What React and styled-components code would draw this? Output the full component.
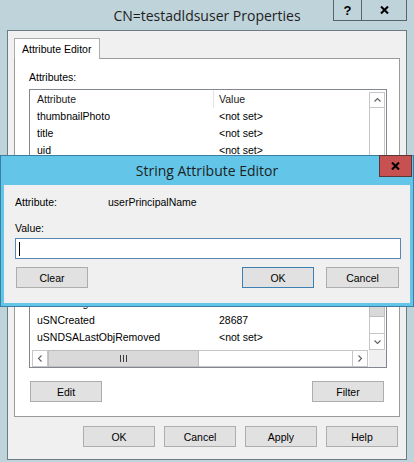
import React from "react";
import styled, { createGlobalStyle } from "styled-components";

const Global = createGlobalStyle`
  html, body { margin: 0; padding: 0; }
  body {
    width: 414px; height: 462px; overflow: hidden;
    font-family: "Liberation Sans", Arial, sans-serif;
    font-size: 10.5px; color: #000;
  }
`;

const Window = styled.div`
  position: relative;
  width: 414px; height: 462px; box-sizing: border-box;
  background: #bfd3da;
  padding: 0 7px 2px;
  display: flex; flex-direction: column;
`;

const TitleBar = styled.div`
  height: 30px; flex: none;
  display: grid; grid-template-columns: 1fr auto 1fr; align-items: center;
`;

const TitleText = styled.div`
  grid-column: 2;
  font-family: "Open Sans", "Liberation Sans", sans-serif;
  font-size: 14px; color: #1e1e1e;
  padding-top: ${(p) => (p.$pt ? p.$pt : 0)}px;
`;

const CaptionButtons = styled.div`
  grid-column: 3; justify-self: end; align-self: start;
  display: flex;
`;

const CaptionButton = styled.div`
  width: ${(p) => p.$w}px; height: 21px; box-sizing: border-box;
  border: 1px solid #56646c; border-top: none;
  & + & { border-left: none; }
  display: flex; align-items: center; justify-content: center;
  font-family: "Liberation Sans", Arial, sans-serif;
  font-weight: bold; font-size: 13px; color: #000;
`;

const Client = styled.div`
  flex: 1;
  border: 1px solid #6c7b84;
  background: #f0f0f0;
  padding: 7px 6px 12px;
  display: flex; flex-direction: column;
`;

const TabStrip = styled.div`
  display: flex; flex: none;
`;

const Tab = styled.div`
  height: 21px; box-sizing: border-box;
  border: 1px solid #acacac; border-bottom: none;
  background: #fff;
  padding: 0 8px 0 7px; line-height: 20px;
  margin-bottom: -1px; position: relative; z-index: 1;
`;

const TabPanel = styled.div`
  height: 359px; box-sizing: border-box;
  background: #fff;
  border: 1px solid #9a9a9a;
  padding: 12px 13px 14px 14px;
  display: flex; flex-direction: column;
`;

const Label = styled.div`
  line-height: 13px; margin-bottom: 5px;
`;

const ListBox = styled.div`
  width: 358px; height: 279px; box-sizing: border-box;
  border: 1px solid #828790;
  background: #fff;
  display: grid;
  grid-template-columns: 1fr 17px;
  grid-template-rows: 1fr 17px;
`;

const ListView = styled.div`
  overflow: hidden; display: flex; flex-direction: column;
`;

const HeaderRow = styled.div`
  display: flex; height: 18px; flex: none; line-height: 18px; color: #1a1a1a;
`;

const HeaderCell = styled.div`
  width: ${(p) => p.$w}px; box-sizing: border-box; flex: none;
  padding-left: ${(p) => p.$pl}px;
  border-right: ${(p) => (p.$sep ? "1px solid #e3e3e3" : "none")};
`;

const Rows = styled.div`
  flex: 1; overflow: hidden;
`;

const Row = styled.div`
  display: flex; height: 17px; line-height: 17px; white-space: nowrap;
`;

const Cell = styled.div`
  width: ${(p) => p.$w}px; box-sizing: border-box; flex: none;
  padding-left: ${(p) => p.$pl}px;
`;

const VScroll = styled.div`
  display: flex; flex-direction: column;
  padding-top: 2px;
`;

const ScrollBox = styled.div`
  box-sizing: border-box; flex: none;
  width: ${(p) => p.$w || 16}px; height: ${(p) => p.$h || 16}px;
  border: 1px solid #c6c6c6;
  background: #fff;
  display: flex; align-items: center; justify-content: center;
`;

const VTrack = styled.div`
  flex: 1; width: 16px; box-sizing: border-box;
  border-left: 1px solid #c6c6c6; border-right: 1px solid #c6c6c6;
`;

const VGap = styled.div`
  width: 16px; height: 16px; box-sizing: border-box; flex: none;
  border-left: 1px solid #c6c6c6; border-right: 1px solid #c6c6c6;
`;

const Thumb = styled.div`
  box-sizing: border-box; flex: none;
  width: ${(p) => p.$w}px; height: ${(p) => p.$h}px;
  background: #d9d9d9; border: 1px solid #bdbdbd;
  display: flex; align-items: center; justify-content: center;
`;

const HScroll = styled.div`
  display: flex; padding: 0 1px 0 2px;
`;

const HTrack = styled.div`
  flex: 1; box-sizing: border-box;
  border-top: 1px solid #c6c6c6; border-bottom: 1px solid #c6c6c6;
`;

const Corner = styled.div`
  background: #f0f0f0;
`;

const PanelButtons = styled.div`
  margin-top: 13px;
  display: flex; justify-content: space-between;
  padding: 0 2px 0 1px;
`;

const Button = styled.div`
  width: ${(p) => p.$w || 72}px; height: 21px; box-sizing: border-box; flex: none;
  border: 1px solid ${(p) => (p.$focus ? "#3c7fb1" : "#adadad")};
  background: #e1e1e1;
  display: flex; align-items: center; justify-content: center;
  color: #000;
  margin-left: ${(p) => (p.$push ? "auto" : "0")};
`;

const FooterButtons = styled.div`
  margin-top: 9px;
  display: flex; justify-content: flex-end; gap: 9px;
  padding-right: 2px;
`;

const Dialog = styled.div`
  position: absolute; left: 0; top: 155px;
  width: 414px; height: 152px; box-sizing: border-box;
  border: 1px solid #3a7fa3;
  background: #63c6e9;
  padding: 0 3px 3px;
  display: flex; flex-direction: column;
`;

const DialogTitleBar = styled.div`
  height: 29px; flex: none;
  display: grid; grid-template-columns: 1fr auto 1fr; align-items: center;
`;

const CloseButton = styled.div`
  grid-column: 3; justify-self: end; align-self: start;
  margin: -1px -2px 0 0;
  width: 33px; height: 22px; box-sizing: border-box;
  background: #c75050; border: 1px solid #5a3636;
  display: flex; align-items: center; justify-content: center;
`;

const DialogClient = styled.div`
  flex: 1;
  background: #f0f0f0;
  padding: 11px 9px 0 11px;
  display: flex; flex-direction: column;
`;

const FieldRow = styled.div`
  display: flex; line-height: 13px;
`;

const FieldLabel = styled.div`
  width: 93px; flex: none;
`;

const ValueLabel = styled.div`
  margin-top: 13px; line-height: 13px;
`;

const TextInput = styled.div`
  margin-top: 3px;
  height: 21px; box-sizing: border-box;
  border: 1px solid #5a86b3;
  background: #fff;
  display: flex; align-items: center;
`;

const Caret = styled.span`
  display: block; width: 1px; height: 14px; background: #000; margin-left: 3px;
`;

const DialogButtons = styled.div`
  margin-top: 8px;
  display: flex; gap: 12px;
  padding: 0 2px 0 1px;
`;

const Chevron = ({ dir }) => {
  const pts = {
    up: "0.5,4.5 3.5,1.5 6.5,4.5",
    down: "0.5,1.5 3.5,4.5 6.5,1.5",
    left: "4.5,0.5 1.5,3.5 4.5,6.5",
    right: "1.5,0.5 4.5,3.5 1.5,6.5",
  }[dir];
  const vertical = dir === "up" || dir === "down";
  return (
    <svg width={vertical ? 7 : 6} height={vertical ? 6 : 7} viewBox={vertical ? "0 0 7 6" : "0 0 6 7"}>
      <polyline points={pts} fill="none" stroke="#606060" strokeWidth="1.1" />
    </svg>
  );
};

const Grip = () => (
  <svg width="7" height="7" viewBox="0 0 7 7">
    <path d="M0.5 0v7M3.5 0v7M6.5 0v7" stroke="#3c3c3c" strokeWidth="1" />
  </svg>
);

const XMark = ({ size = 9 }) => (
  <svg width={size} height={size - 1} viewBox="0 0 9 8">
    <path d="M1 0.5L8 7.5M8 0.5L1 7.5" stroke="#000" strokeWidth="2.1" />
  </svg>
);

const rows = [
  ["thumbnailPhoto", "<not set>"],
  ["title", "<not set>"],
  ["uid", "<not set>"],
  ["uidNumber", "<not set>"],
  ["unicodePwd", "<not set>"],
  ["unixHomeDirectory", "<not set>"],
  ["unixUserPassword", "<not set>"],
  ["url", "<not set>"],
  ["userCert", "<not set>"],
  ["userPassword", "<not set>"],
  ["userPrincipalName", "<not set>"],
  ["uSNChanged", "28691"],
  ["uSNCreated", "28687"],
  ["uSNDSALastObjRemoved", "<not set>"],
];

export default function App() {
  return (
    <>
      <Global />
      <Window>
        <TitleBar>
          <TitleText $pt={1}>CN=testadldsuser Properties</TitleText>
          <CaptionButtons>
            <CaptionButton $w={29}>?</CaptionButton>
            <CaptionButton $w={45}>
              <XMark />
            </CaptionButton>
          </CaptionButtons>
        </TitleBar>
        <Client>
          <TabStrip>
            <Tab>Attribute Editor</Tab>
          </TabStrip>
          <TabPanel>
            <Label>Attributes:</Label>
            <ListBox>
              <ListView>
                <HeaderRow>
                  <HeaderCell $w={184} $pl={7} $sep>Attribute</HeaderCell>
                  <HeaderCell $w={160} $pl={5}>Value</HeaderCell>
                </HeaderRow>
                <Rows>
                  {rows.map(([name, value]) => (
                    <Row key={name}>
                      <Cell $w={183} $pl={7}>{name}</Cell>
                      <Cell $w={160} $pl={6}>{value}</Cell>
                    </Row>
                  ))}
                </Rows>
              </ListView>
              <VScroll>
                <ScrollBox $h={16}>
                  <Chevron dir="up" />
                </ScrollBox>
                <VTrack />
                <Thumb $w={16} $h={26} />
                <VGap />
                <ScrollBox $h={17}>
                  <Chevron dir="down" />
                </ScrollBox>
              </VScroll>
              <HScroll>
                <ScrollBox $w={16} $h={17}>
                  <Chevron dir="left" />
                </ScrollBox>
                <Thumb $w={151} $h={17}>
                  <Grip />
                </Thumb>
                <HTrack />
                <ScrollBox $w={16} $h={17}>
                  <Chevron dir="right" />
                </ScrollBox>
              </HScroll>
              <Corner />
            </ListBox>
            <PanelButtons>
              <Button>Edit</Button>
              <Button>Filter</Button>
            </PanelButtons>
          </TabPanel>
          <FooterButtons>
            <Button>OK</Button>
            <Button>Cancel</Button>
            <Button>Apply</Button>
            <Button>Help</Button>
          </FooterButtons>
        </Client>
        <Dialog>
          <DialogTitleBar>
            <TitleText>String Attribute Editor</TitleText>
            <CloseButton>
              <XMark />
            </CloseButton>
          </DialogTitleBar>
          <DialogClient>
            <FieldRow>
              <FieldLabel>Attribute:</FieldLabel>
              <div>userPrincipalName</div>
            </FieldRow>
            <ValueLabel>Value:</ValueLabel>
            <TextInput>
              <Caret />
            </TextInput>
            <DialogButtons>
              <Button>Clear</Button>
              <Button $push $focus>OK</Button>
              <Button $w={73}>Cancel</Button>
            </DialogButtons>
          </DialogClient>
        </Dialog>
      </Window>
    </>
  );
}
